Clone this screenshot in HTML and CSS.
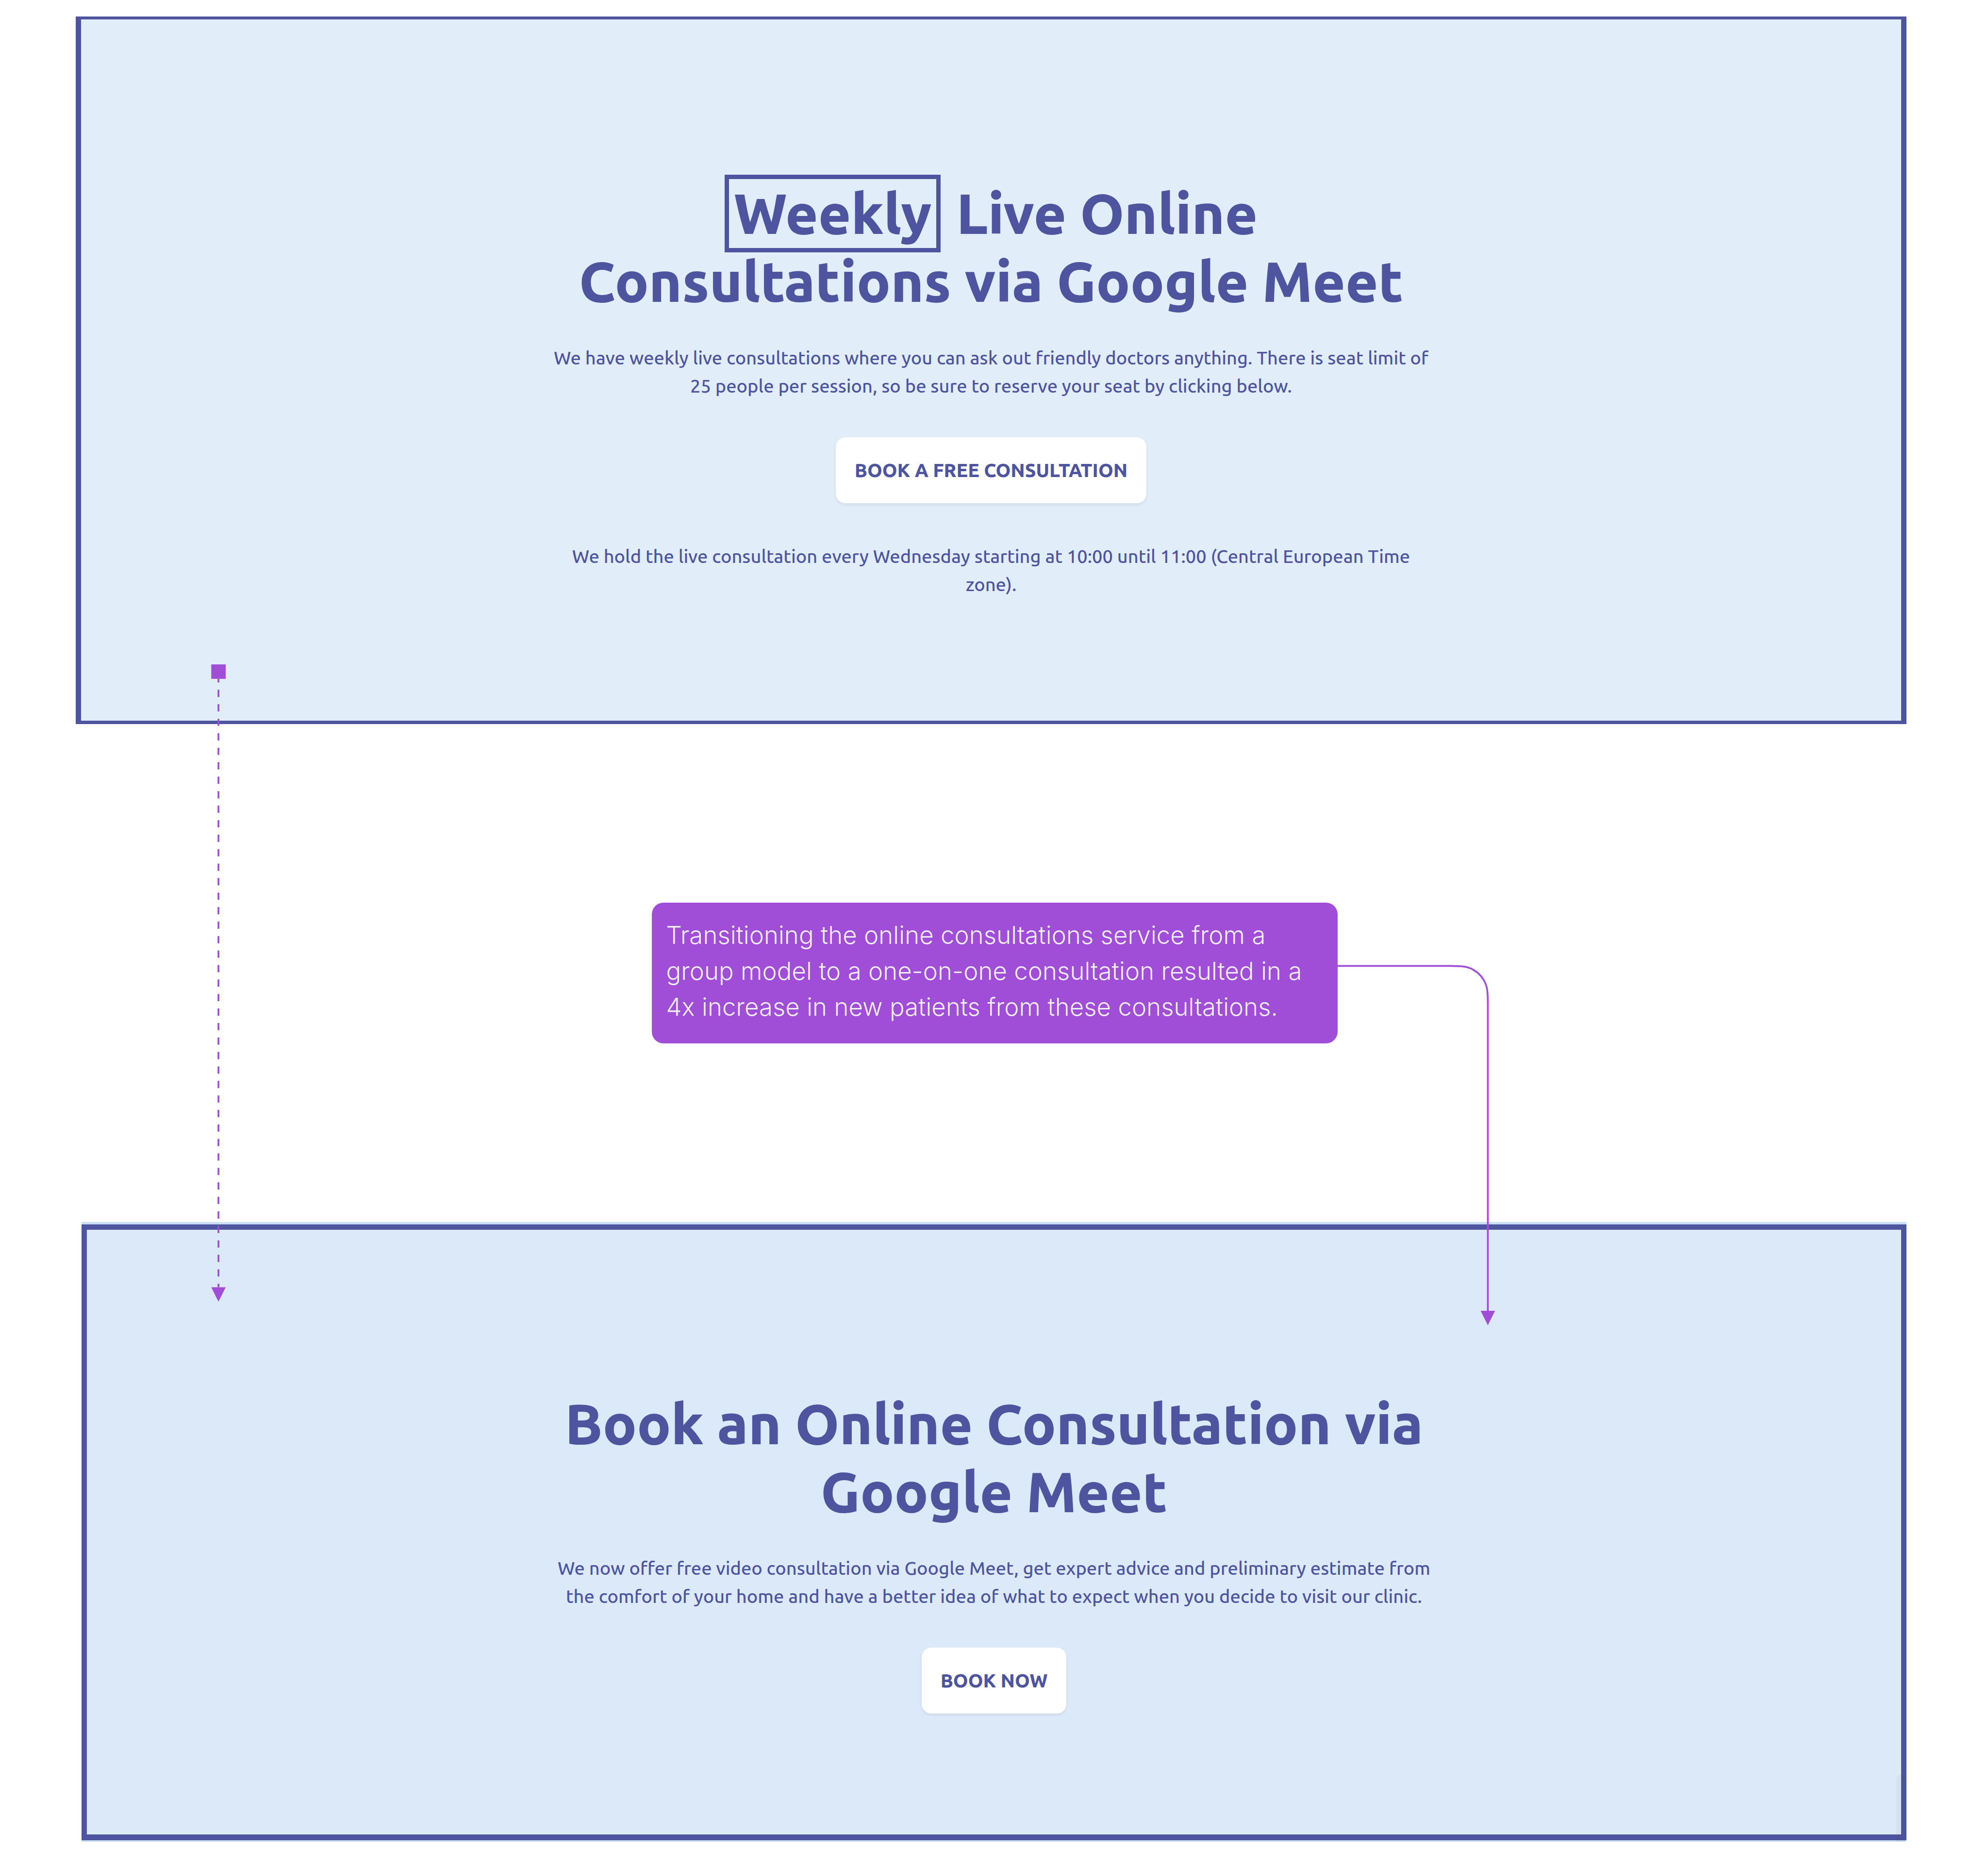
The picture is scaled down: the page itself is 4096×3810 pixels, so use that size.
FILE: index.html
```html
<!DOCTYPE html>
<html lang="en">
<head>
  <meta charset="utf-8">
  <meta name="viewport" content="width=device-width, initial-scale=1">
  <title>Online consultations: before and after</title>
  <link rel="stylesheet" href="styles.css">
</head>
<body>
  <main class="board">
    <section class="panel panel-before">
      <h2 class="title"><span class="marked">Weekly</span> Live Online Consultations via Google Meet</h2>
      <p class="text">We have weekly live consultations where you can ask out friendly doctors anything. There is seat limit of 25 people per session, so be sure to reserve your seat by clicking below.</p>
      <button class="button" type="button">BOOK A FREE CONSULTATION</button>
      <p class="text text-after">We hold the live consultation every Wednesday starting at 10:00 until 11:00 (Central European Time zone).</p>
    </section>

    <aside class="note">Transitioning the online consultations service from a group model to a one-on-one consultation resulted in a 4x increase in new patients from these consultations.</aside>

    <div class="frame">
      <section class="panel panel-after">
        <h2 class="title">Book an Online Consultation via Google Meet</h2>
        <p class="text">We now offer free video consultation via Google Meet, get expert advice and preliminary estimate from the comfort of your home and have a better idea of what to expect when you decide to visit our clinic.</p>
        <button class="button" type="button">BOOK NOW</button>
      </section>
      <span class="thumb"></span>
    </div>

    <svg class="connectors" viewBox="0 0 4404 4096" aria-hidden="true">
      <rect x="468" y="1472" width="32" height="32"/>
      <path class="line dashed" d="M484 1504V2852"/>
      <path d="M468 2852H500L484 2884Z"/>
      <path class="line" d="M2963 2140H3214C3240 2140 3252 2141.6 3264 2148.6A64 64 0 0 1 3287.4 2172C3294.4 2184 3296 2196 3296 2222V2904"/>
      <path d="M3280 2904H3312L3296 2936Z"/>
    </svg>
  </main>
</body>
</html>
```
FILE: styles.css
```css
:root {
  --indigo: #4e559e;
  --violet: #a04dd8;
}

* {
  box-sizing: border-box;
}

body {
  margin: 0;
  background: #fff;
  color: var(--indigo);
  font-family: Ubuntu, "Noto Sans", sans-serif;
}

.board {
  position: relative;
  display: flex;
  flex-direction: column;
  padding: 34px 168px 15px 156px;
}

.panel {
  display: flex;
  flex-direction: column;
  align-items: center;
  border: 11px solid var(--indigo);
  text-align: center;
}

.panel-before {
  padding: 329px 40px 252px;
  border-top-width: 6px;
  border-bottom-width: 7px;
  background: #e1edf8;
}

.panel-after {
  padding: 329px 40px 249px;
  border-bottom-width: 12px;
  background: #dce9f9;
}

.title {
  max-width: 1820px;
  margin: 0;
  font-size: 116px;
  font-weight: 800;
  line-height: 140px;
}

.marked {
  margin-right: 4px;
  padding: 5px 10px 7px;
  border: 9px solid var(--indigo);
}

.text {
  max-width: 1820px;
  margin: 59px 0 0;
  font-size: 38px;
  font-weight: 500;
  line-height: 58px;
}

.text-after {
  margin-top: 80px;
}

.button {
  margin-top: 77px;
  padding: 0 39px;
  border: 0;
  border-radius: 20px;
  background: #fff;
  box-shadow: 0 3px 6px rgba(0, 0, 0, 0.08);
  color: inherit;
  font: 800 39px/136px Ubuntu, "Noto Sans", sans-serif;
}

.note {
  align-self: center;
  width: 1413px;
  max-width: 100%;
  margin: 368px 0 368px 14px;
  padding: 30px 32px 38px 30px;
  border-radius: 24px;
  background: var(--violet);
  color: #f0eff1;
  font: 300 51px/74px Inter, sans-serif;
}

.frame {
  position: relative;
  margin-left: 12px;
  padding: 5px 0 3px;
  background: #cadff5;
}

.thumb {
  position: absolute;
  right: 3px;
  bottom: 0;
  width: 18px;
  height: 138px;
  border-radius: 9px 9px 0 0;
  background: rgba(60, 60, 0, 0.04);
}

.connectors {
  position: absolute;
  top: 0;
  left: 0;
  width: 100%;
  fill: var(--violet);
  pointer-events: none;
}

.line {
  fill: none;
  stroke: var(--violet);
  stroke-width: 4;
}

.dashed {
  stroke-dasharray: 16.05;
  stroke-dashoffset: 8;
}
```
